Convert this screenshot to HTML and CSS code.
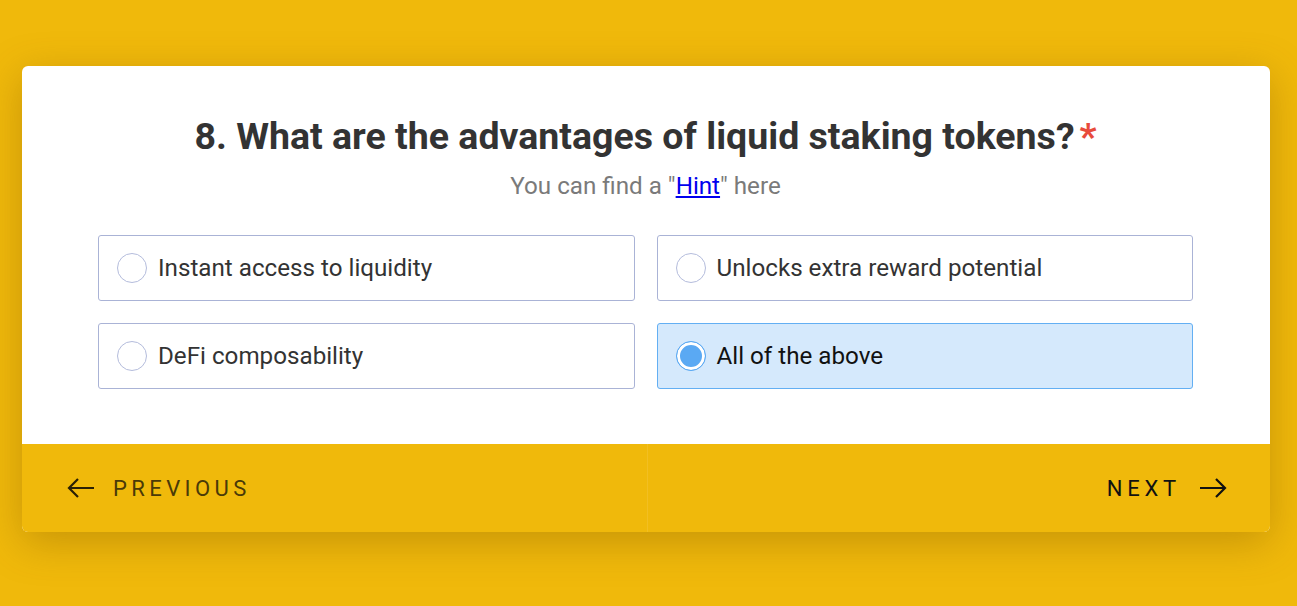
FILE: index.html
```html
<!DOCTYPE html>
<html>
<head>
<meta charset="utf-8">
<link rel="stylesheet" href="styles.css">
</head>
<body>
<div class="card">
  <div class="body">
    <h1 class="title">8. What are the advantages of liquid staking tokens?<span class="req">*</span></h1>
    <p class="sub">You can find a "<a href="#">Hint</a>" here</p>
    <div class="options">
      <label class="opt"><span class="radio"></span><span>Instant access to liquidity</span></label>
      <label class="opt"><span class="radio"></span><span>Unlocks extra reward potential</span></label>
      <label class="opt"><span class="radio"></span><span>DeFi composability</span></label>
      <label class="opt sel"><span class="radio"></span><span>All of the above</span></label>
    </div>
  </div>
  <div class="foot">
    <div class="nav prev">
      <svg width="28" height="20" viewBox="0 0 28 20"><path d="M27 10H2M11 1L2 10l9 9" fill="none" stroke="currentColor" stroke-width="2.2"/></svg>
      <span>PREVIOUS</span>
    </div>
    <div class="nav next">
      <span>NEXT</span>
      <svg width="28" height="20" viewBox="0 0 28 20"><path d="M1 10h25M17 1l9 9-9 9" fill="none" stroke="currentColor" stroke-width="2.2"/></svg>
    </div>
  </div>
</div>
</body>
</html>
```
FILE: styles.css
```css
html, body { margin: 0; padding: 0; }
body {
  background: #f0b90b;
  font-family: Roboto, "Liberation Sans", sans-serif;
  height: 606px;
  overflow: hidden;
  padding-top: 66px;
  box-sizing: border-box;
}
.card {
  margin-left: 22px;
  width: 1248px;
  background: #fff;
  border-radius: 6px;
  overflow: hidden;
  box-shadow: 0 10px 40px rgba(120, 80, 0, 0.35);
}
.body {
  padding: 47px 77px 55px 76px;
  text-align: center;
}
.title {
  margin: 0;
  font-size: 37.5px;
  font-weight: 700;
  color: #333;
  line-height: 46px;
}
.req { color: #e84b3c; margin-left: 5px; font-weight: 700; }
.sub {
  margin: 12px 0 0;
  font-size: 24.2px;
  line-height: 30px;
  color: #7a7a7a;
}
.sub a { color: #0000ee; }
.options {
  margin-top: 34px;
  display: grid;
  grid-template-columns: 1fr 1fr;
  gap: 22px 22px;
  text-align: left;
}
.opt {
  display: flex;
  align-items: center;
  height: 66px;
  box-sizing: border-box;
  border: 1px solid #aab3d6;
  border-radius: 3px;
  padding-left: 18px;
  font-size: 24.2px;
  color: #333;
  background: #fff;
}
.radio {
  width: 30px;
  height: 30px;
  box-sizing: border-box;
  border: 1px solid #b4bcdc;
  border-radius: 50%;
  margin-right: 11px;
  background: #fff;
  flex: none;
}
.opt.sel {
  background: #d5e9fc;
  border-color: #63aff3;
  color: #111;
}
.opt.sel .radio {
  border: 1px solid #5aa9f3;
  background: #5aa9f3;
  box-shadow: inset 0 0 0 3px #fff;
}
.foot {
  display: flex;
  height: 88px;
  background: #f0b90b;
}
.nav {
  flex: 1;
  display: flex;
  align-items: center;
  font-size: 22px;
  letter-spacing: 4.4px;
}
.prev {
  padding-left: 45px;
  color: #4a3a08;
  border-right: 1px solid #f2bf22;
}
.prev svg { margin-right: 18px; color: #2a2005; }
.next {
  justify-content: flex-end;
  padding-right: 43px;
  color: #111;
  letter-spacing: 4.8px;
}
.next svg { margin-left: 18px; }
```
